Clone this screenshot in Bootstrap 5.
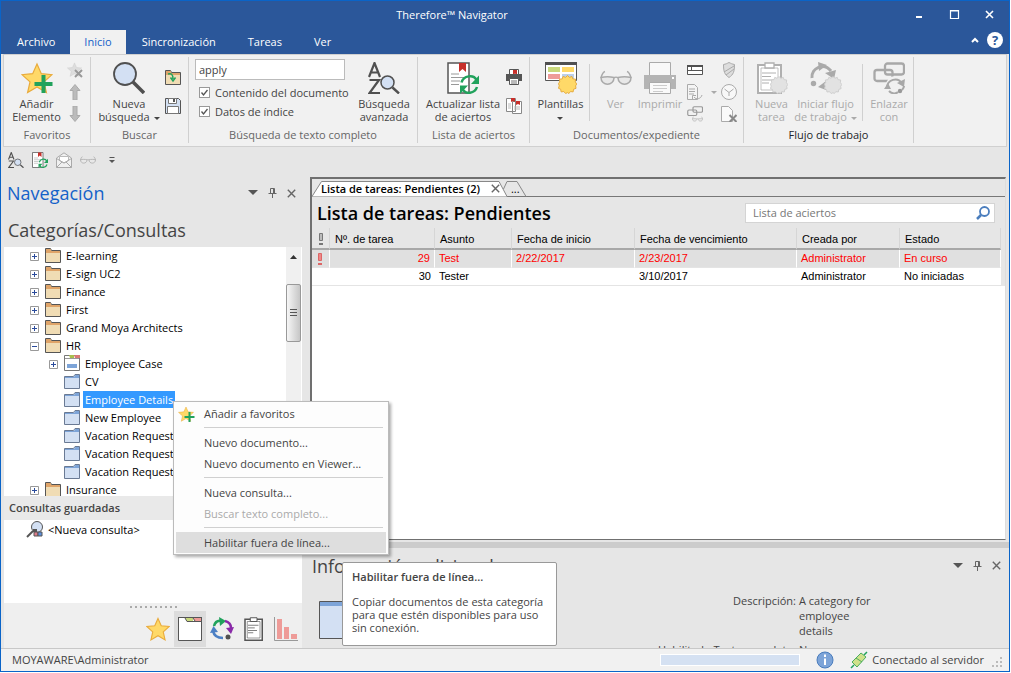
<!DOCTYPE html>
<html lang="es">
<head>
<meta charset="utf-8">
<meta name="viewport" content="width=device-width, initial-scale=1">
<title>Therefore™ Navigator</title>
<link href="https://cdn.jsdelivr.net/npm/bootstrap@5.3.0/dist/css/bootstrap.min.css" rel="stylesheet">
<style>
  :root { --ink:#444; --brand:#2b579a; --edge:#0a64c8; --face:#e6e6e6; --pale:#f1f1f1; --line:#d0d0d0; }
  html, body { height:100%; }
  body { font:11px/13px "Open Sans", "Noto Sans", sans-serif; color:var(--ink); background:#fff; overflow:hidden; padding:0 1px 1px 0; }
  button { background:none; border:0; padding:0; color:inherit; font:inherit; }
  svg { display:block; flex:none; }
  a { color:inherit; text-decoration:none; }
  .app { height:100%; border:1px solid var(--edge); background:var(--face); }
  .titlebar { background:var(--brand); color:#fff; height:53px; }
  .wintools { position:absolute; right:14px; top:6px; gap:24px; }
  .helptools { position:absolute; right:6px; top:31px; gap:8px; }
  .helpmark { color:var(--brand); width:16px; height:16px; font-size:13px; line-height:16px; }
  .wintitle { height:27px; padding-right:106px; }
  .rtabs a { padding:0 16px; height:24px; line-height:24px; color:#fff; }
  .rtabs a:first-child { padding-right:15px; }
  .rtabs a.active { background:var(--pale); color:#1462c9; padding:0 14px; }
  .ribbon { background:var(--pale); border:1px solid var(--line); margin:0 2px; height:93px; }
  .group { height:86px; margin-top:2px; border-right:1px solid var(--line); display:flex; flex-direction:column; flex:none; }
  .group .body { flex:1; display:flex; padding:5px 2px 0; min-height:0; }
  .group .cap { height:20px; padding-top:5px; text-align:center; color:#666; }
  .big { display:flex; flex-direction:column; align-items:center; text-align:center; gap:3px; flex:none; align-self:flex-start; white-space:nowrap; }
  .stack3 { display:flex; flex-direction:column; gap:6px; flex:none; }
  .stack2 { display:flex; flex-direction:column; gap:13px; padding-top:7px; flex:none; }
  .off { color:#aaa; }
  .vline { width:1px; background:var(--line); height:57px; margin-top:2px; flex:none; }
  .caret { display:inline-block; border:3px solid transparent; border-top-color:currentColor; border-bottom:0; vertical-align:middle; }
  .fsearch { display:flex; flex-direction:column; gap:6px; padding:2px 0 0 2px; }
  .fsearch label { display:flex; align-items:center; gap:5px; margin-left:4px; white-space:nowrap; }
  .ftext { width:150px; height:21px; border:1px solid #bbb; padding:0 3px; background:#fff; color:#444; }
  .tick { appearance:none; width:11px; height:11px; border:1px solid #999; background:#fff; margin:0; flex:none; }
  .tick:checked { background:#fff url("data:image/svg+xml,%3Csvg xmlns='http://www.w3.org/2000/svg' viewBox='0 0 9 9'%3E%3Cpath d='M1.5 4.5l2 2.5 4-5' fill='none' stroke='%23555' stroke-width='1.3'/%3E%3C/svg%3E") center/9px no-repeat; }
  .quick { height:28px; padding:4px 7px 6px; gap:8px; }
  .main { flex:1; min-height:0; display:flex; }
  .side { width:298px; margin-left:3px; flex:none; }
  .sidehead { height:38px; padding:0 6px 2px 3px; }
  .panetools { display:flex; align-items:center; gap:10px; }
  .big-title { font-size:18px; line-height:24px; font-weight:400; margin:0; }
  .navtitle { color:#1462c9; }
  .tree { background:#fff; height:249px; overflow:hidden; color:#000; }
  .tree ul { list-style:none; margin:-1px 0 0; padding:0; }
  .node { display:flex; align-items:center; height:18px; padding-left:26px; white-space:nowrap; }
  .node.sub { padding-left:45px; }
  .node.leaf { padding-left:60px; }
  .node .name { padding:0 2px; line-height:17px; margin-left:3px; }
  .node.sel .name { background:#3399ff; color:#fff; }
  .pm { margin-right:6px; margin-top:3px; }
  .scroller { width:15px; margin-right:1px; background:#f0f0f0; display:flex; flex-direction:column; align-items:center; }
  .thumb { width:15px; height:58px; border:1px solid #999; border-radius:2px; background:linear-gradient(90deg,#f6f6f6,#c6c6c6); display:flex; align-items:center; justify-content:center; margin-top:25px; flex:none; }
  .saved { background:#e9e9e9; height:24px; line-height:24px; padding-left:5px; font-weight:600; margin:0; font-size:11px; }
  .queries { background:#fff; flex:1; color:#000; }
  .queries a { display:flex; align-items:center; gap:4px; padding-left:22px; }
  .shelf { background:#efefef; height:45px; }
  .grip { height:8px; display:flex; justify-content:center; gap:3px; align-items:center; }
  .grip i { width:2px; height:2px; background:#aaa; }
  .shelf button { width:32px; height:36px; display:grid; place-items:center; }
  .shelf button.on { background:#dcdcdc; }
  .content { flex:1; min-width:0; margin-left:7px; }
  .frame { flex:1; min-height:0; border:2px solid #707070; border-right:1px solid #ddd; border-bottom-width:1px; margin:2px 3px 2px 1px; }
  .doctabs { height:18px; border-bottom:1px solid #777; }
  .tabtext { position:absolute; left:0; top:0; height:19px; padding-left:9px; gap:11px; white-space:nowrap; }
  .listhead { height:31px; padding:0 10px 0 5px; }
  .listhead h2 { font-weight:600; color:#000; }
  .hitbox { width:250px; height:20px; background:#fff; border:1px solid #d4d4d4; }
  .hitbox input { border:0; outline:0; background:none; color:#777; padding:0 7px; flex:1; min-width:0; }
  .hitbox input::placeholder { color:#777; opacity:1; }
  .sheet { background:var(--face); }
  .tasks { font:11px/17px "Liberation Sans", Arial, sans-serif; color:#000; background:#fff; table-layout:fixed; border-collapse:separate; border-spacing:0; width:calc(100% - 4px); }
  .tasks th { font-weight:400; height:22px; padding:2px 5px 0; border-right:1px solid #d6d6d6; border-bottom:2px solid #a8a8a8; background:var(--face); }
  .tasks th:first-child { padding-left:7px; }
  .tasks td { height:18px; padding:0 4px; border-bottom:1px solid #e4e4e4; }
  .tasks td:first-child { padding-left:6px; }
  .tasks tr.late td { color:#f00; background:#e0e0e0; border-right:1px solid #fff; }
  .info { background:var(--face); height:100px; overflow:hidden; }
  .infohead { height:35px; padding:0 8px 0 3px; }
  .infobody { padding:10px 118px 0 10px; }
  .facts { grid-template-columns:auto 92px; column-gap:3px; line-height:15px; margin:0; }
  .bar { background:#ccc; height:6px; }
  .status { height:23px; background:var(--pale); border-top:1px solid #c8c8c8; padding:0 7px 1px 11px; }
  .meter { width:140px; height:12px; background:#d5e1f2; border:1px solid #fff; }
  .ctx { position:absolute; left:172px; top:400px; width:216px; background:#fdfdfd; border:1px solid #bbb; box-shadow:2px 2px 3px #0005; padding:1px 2px; }
  .ctx button { display:flex; align-items:center; width:100%; height:21px; text-align:left; gap:8px; }
  .ctx button.plain { padding-left:28px; }
  .ctx hr { margin:3px 3px 4px 28px; border:0; border-top:1px solid #d0d0d0; opacity:1; }
  .ctx .hot { background:#dedede; }
  .tip { position:absolute; left:341px; top:561px; width:215px; height:84px; background:#fff; border:1px solid #999; border-radius:2px; padding:7px 9px; }
  .tip strong { display:block; font-weight:600; margin-bottom:12px; }
</style>
</head>
<body>
<svg width="0" height="0" class="position-absolute">
  <defs>
    <symbol id="star" viewBox="0 0 32 32"><path d="M16 2l4.300 9.700 10.700 1-8 7.200 2.400 10.600L16 25l-9.400 5.500L9 19.900l-8-7.200 10.700-1z"/></symbol>
    <symbol id="folder" viewBox="0 0 16 16"><path d="M.5 15.500V1.500h5l1 2h9v12z" fill="#f0dcb4" stroke="#555"/><path d="M1 2h4.300l1 2H15v2H1z" fill="#dfa469"/></symbol>
    <symbol id="cat" viewBox="0 0 16 16"><path d="M.5 15.500v-12h9l1.500-2h4.500v14z" fill="#d3e0f3" stroke="#6a7a94"/><path d="M1 4h9l1.500-2H15v3H1z" fill="#7da4d8"/></symbol>
    <symbol id="plus" viewBox="0 0 9 9"><path d="M.5.5h8v8h-8z" fill="#fff" stroke="#999"/><path d="M2 4.500h5M4.500 2v5" stroke="#2a4b9b"/></symbol>
    <symbol id="minus" viewBox="0 0 9 9"><path d="M.5.5h8v8h-8z" fill="#fff" stroke="#999"/><path d="M2 4.500h5" stroke="#2a4b9b"/></symbol>
    <symbol id="pin" viewBox="0 0 9 10"><path d="M2.500 5.500v-5h4v5M5.500 1v4M.5 5.500h8M4.500 6v4" fill="none" stroke="#666"/></symbol>
    <symbol id="cross" viewBox="0 0 9 9"><path d="M.8.800l7.400 7.400M8.200.800L.8 8.200" stroke="#666" stroke-width="1.400"/></symbol>
    <symbol id="az" viewBox="0 0 32 32"><path d="M1 15L6.500 1l5.500 14M3 10.500h7M1.500 18H11L1.500 31H12" fill="none" stroke="#505050" stroke-width="2.200"/><path d="M24.500 25.500l6.500 6" stroke="#505050" stroke-width="2.400"/><circle cx="19.500" cy="20.500" r="6.500" fill="#d3e0f3" stroke="#505050" stroke-width="1.500"/></symbol>
    <symbol id="refresh" viewBox="0 0 32 32"><path d="M1 1h21v30H1z" fill="#fff" stroke="#555" stroke-width="1.500"/><path d="M12 1h7v9l-3.500-3-3.500 3z" fill="#c8302b"/><path d="M4 12h8M4 15.500h14M4 19h9M4 22.500h8" stroke="#999"/><path d="M14.500 20.500c2-7 12-8.500 15-2.500M30 25c-2 6.500-11.500 8-14.500 2" fill="none" stroke="#21a25c" stroke-width="2.500"/><path d="M32 13.500v8.500h-8zM13 32v-8.500h8z" fill="#21a25c"/></symbol>
    <symbol id="glasses" viewBox="0 0 32 16"><path d="M5 1.500C3 2 2 4 1 8M27 1.500c2 .5 3 2.500 4 6.500M14 8c1-1 3-1 4 0" fill="none" stroke="#aaa" stroke-width="1.500"/><path d="M1 7.500c4-1 9-1 13 0 0 9-13 9-13 0zM18 7.500c4-1 9-1 13 0 0 9-13 9-13 0z" fill="#e8e8e8" stroke="#aaa" stroke-width="1.500"/></symbol>
    <symbol id="burst" viewBox="0 0 20 20"><path d="M10 .500l2 2 2.700-1 .9 2.600 2.900.300-.3 2.900 1.500 2.200-1.200 2 .5 2.500-2.600 1-.5 2.800-2.800-.4-1.600 2.100L10 18.500l-2 1-1.900-2.100-2.800.4-.5-2.800-2.300-1 .8-2.700L.500 9l1.300-1.700-.3-2.900 2.900-.3.900-2.600 2.700 1z"/></symbol>
    <symbol id="clip" viewBox="0 0 28 32"><path d="M2 3h23v28H2z" fill="#fff" stroke="currentColor" stroke-width="2"/><path d="M5 6h17v22H5z" fill="none" stroke="currentColor" stroke-width=".8"/><path d="M9 1h9v5H9z" fill="#fff" stroke="currentColor" stroke-width="1.300"/><path d="M6 11h14M6 14.500h9M6 18h12M6 21h7" stroke="currentColor"/></symbol>
    <symbol id="link" viewBox="0 0 32 32"><rect x="12" y="1.500" width="19" height="11" rx="2.500" fill="none" stroke="currentColor" stroke-width="2.300"/><rect x="1.500" y="8" width="18" height="11" rx="2.500" fill="none" stroke="currentColor" stroke-width="2.300"/></symbol>
  </defs>
</svg>

<div class="app d-flex flex-column position-relative">
  <header class="titlebar d-flex flex-column position-relative flex-shrink-0">
    <div class="wintitle d-flex align-items-center justify-content-center">Therefore™ Navigator</div>
    <div class="wintools d-flex">
      <button aria-label="Minimizar"><svg width="11" height="14"><path d="M2 10h6" stroke="#fff" stroke-width="2"/></svg></button>
      <button aria-label="Maximizar"><svg width="11" height="14"><path d="M1.500 3.500h8v8h-8zM1 4h9" fill="none" stroke="#fff" stroke-width="1.200"/></svg></button>
      <button aria-label="Cerrar"><svg width="11" height="14"><path d="M2 4l7 7M9 4l-7 7" stroke="#fff" stroke-width="1.600"/></svg></button>
    </div>
    <div class="helptools d-flex align-items-center">
      <button aria-label="Contraer"><svg width="8" height="6"><path d="M1 5l3-3 3 3" fill="none" stroke="#fff" stroke-width="2"/></svg></button>
      <button aria-label="Ayuda" class="helpmark rounded-circle bg-white fw-bold text-center">?</button>
    </div>
    <nav class="rtabs d-flex mt-auto">
      <a href="#">Archivo</a><a href="#" class="active">Inicio</a><a href="#">Sincronización</a><a href="#">Tareas</a><a href="#">Ver</a>
    </nav>
  </header>

  <section class="ribbon d-flex flex-shrink-0">
    <div class="group" style="width:87px">
      <div class="body">
        <button class="big" style="width:61px"><svg width="32" height="32"><use href="#star" fill="#ffd968" stroke="#e9ab3c" stroke-width="1.200"/><path d="M22.500 13v18M13.500 22h18" stroke="#21a25c" stroke-width="4"/></svg><span>Añadir<br>Elemento</span></button>
        <div class="stack3">
          <button aria-label="Quitar"><svg width="16" height="16"><use href="#star" width="15" height="15" fill="#ddd" stroke="#ccc"/><path d="M8 8l7 7M15 8l-7 7" stroke="#999" stroke-width="2"/></svg></button>
          <button aria-label="Subir"><svg width="16" height="16"><path d="M8 .500l5 6h-3V16H6V6.500H3z" fill="#bbb" stroke="#aaa"/></svg></button>
          <button aria-label="Bajar"><svg width="16" height="16"><path d="M8 15.500l5-6h-3V0H6v9.500H3z" fill="#bbb" stroke="#aaa"/></svg></button>
        </div>
      </div>
      <div class="cap">Favoritos</div>
    </div>
    <div class="group" style="width:98px">
      <div class="body">
        <button class="big" style="width:72px"><svg width="32" height="32"><path d="M20 20l11 11" stroke="#505050" stroke-width="3.500"/><circle cx="12" cy="12" r="11" fill="#d3e0f3" stroke="#505050" stroke-width="1.800"/></svg><span>Nueva<br>búsqueda<i class="caret ms-1"></i></span></button>
        <div class="stack2">
          <button aria-label="Abrir búsqueda"><svg width="16" height="16"><use href="#folder"/><path d="M3 5c3-1 5 0 5 5M5.500 8.500L8 12l2.500-3.500" fill="none" stroke="#21a25c" stroke-width="1.500"/></svg></button>
          <button aria-label="Guardar"><svg width="16" height="16"><path d="M.5.500h13l2 2v13H.5z" fill="#d3e0f3" stroke="#555"/><path d="M3.500.500h8v5h-8zM2.500 8.500h11v7h-11z" fill="#fff" stroke="#777"/><path d="M8 1h2v3H8z" fill="#555"/></svg></button>
        </div>
      </div>
      <div class="cap">Buscar</div>
    </div>
    <div class="group" style="width:229px">
      <div class="body ps-1 pt-0">
        <div class="fsearch">
          <input class="ftext" type="text" value="apply" aria-label="Texto de búsqueda">
          <label><input type="checkbox" class="tick" checked>Contenido del documento</label>
          <label><input type="checkbox" class="tick" checked>Datos de índice</label>
        </div>
        <button class="big ms-auto" style="width:62px;padding-top:5px"><svg width="32" height="32"><use href="#az"/></svg><span>Búsqueda<br>avanzada</span></button>
      </div>
      <div class="cap">Búsqueda de texto completo</div>
    </div>
    <div class="group" style="width:112px">
      <div class="body">
        <button class="big" style="width:86px"><svg width="32" height="32"><use href="#refresh"/></svg><span>Actualizar lista<br>de aciertos</span></button>
        <div class="stack2">
          <button aria-label="Imprimir lista"><svg width="16" height="16"><path d="M3.500.500h9v6h-9z" fill="#fff" stroke="#555"/><path d="M7 1h4v5L9 4.500 7 6z" fill="#c8302b"/><path d="M0 5h16v7H0z" fill="#555"/><path d="M3.500 9.500h9v6h-9z" fill="#fff" stroke="#555"/><path d="M5 12h6M5 14h6" stroke="#777"/></svg></button>
          <button aria-label="Copiar lista"><svg width="16" height="16"><path d="M.5.500h9v13h-9zM6.500 3.500h9v12h-9z" fill="#fff" stroke="#888"/><path d="M5 0h4v4L7 3 5 4zM10 3h4v4l-2-1-2 1z" fill="#c8302b"/><path d="M2 6h3M2 8h3M2 10h3M8 9h6M8 11h6" stroke="#bbb"/></svg></button>
        </div>
      </div>
      <div class="cap">Lista de aciertos</div>
    </div>
    <div class="group" style="width:214px">
      <div class="body">
        <button class="big" style="width:57px"><svg width="32" height="32"><path d="M.5.500h31v18H.5z" fill="#fff" stroke="#555"/><path d="M0 0h32v3H0z" fill="#505050"/><path d="M3 5h12v5H3z" fill="#c9d97c"/><path d="M17 5h12v5H17z" fill="#ffd968"/><path d="M3 12h12v5H3z" fill="#ee9b98"/><path d="M17 12h12v5H17z" fill="#bcd0ea"/><use href="#burst" x="13" y="13" width="19" height="19" fill="#ffd968" stroke="#e5a93c"/></svg><span>Plantillas<br><i class="caret"></i></span></button>
        <span class="vline"></span>
        <button class="big off" style="width:51px"><svg width="32" height="32"><use href="#glasses" y="8" width="32" height="16"/></svg>Ver</button>
        <button class="big off" style="width:38px"><svg width="32" height="32"><path d="M5.500.500h21v14h-21z" fill="#f8f8f8" stroke="#aaa"/><path d="M0 13h32v14H0z" fill="#b4b4b4"/><path d="M5.500 20.500h21v11h-21z" fill="#fafafa" stroke="#aaa"/><path d="M9 23.500h14M9 26.500h14M9 29.500h10" stroke="#ccc"/><path d="M28 15h2v2h-2z" fill="#fff"/></svg>Imprimir</button>
        <div class="stack3 ps-2">
          <button aria-label="Campos"><svg width="16" height="16"><path d="M.5 3.500h15v9H.5zM1 8.500h15M4.500 5v4" fill="#fff" stroke="#555"/><path d="M0 3h16v2H0z" fill="#505050"/></svg></button>
          <button aria-label="Enviar" class="d-flex align-items-center gap-2"><svg width="16" height="16"><path d="M.500.500h7l3 3v12h-10z" fill="#f4f4f4" stroke="#aaa"/><path d="M2 5h6M2 7.500h6M2 10h5M7 13c2 3 7 2 8-2M5.500 15v-3.500H9" fill="none" stroke="#aaa"/></svg><i class="caret off"></i></button>
          <button aria-label="Enlazar"><svg width="16" height="16"><use href="#link" width="16" height="16" color="#999"/><use href="#glasses" x="5" y="10" width="11" height="6"/></svg></button>
        </div>
        <div class="stack3 ms-1">
          <button aria-label="Seguridad"><svg width="16" height="16"><path d="M2.500 2.500C5 2 6 1.500 8 .500c2 1 3 1.500 5.500 2 0 7-1 10-5.500 13-4.500-3-5.500-6-5.500-13zM3 10l10-6M5 13l8-6" fill="#ddd" stroke="#aaa"/></svg></button>
          <button aria-label="Historial"><svg width="16" height="16"><circle cx="8" cy="8" r="7.500" fill="#f8f8f8" stroke="#aaa"/><path d="M3.500 5L8 8.500 12.500 5M8 8.500V12" fill="none" stroke="#aaa"/></svg></button>
          <button aria-label="Eliminar"><svg width="16" height="16"><path d="M.500.500h7l4 4v11h-11z" fill="#fafafa" stroke="#aaa"/><path d="M8.500 9l7 7M15.500 9l-7 7" stroke="#888" stroke-width="2"/></svg></button>
        </div>
      </div>
      <div class="cap">Documentos/expediente</div>
    </div>
    <div class="group" style="width:170px">
      <div class="body">
        <button class="big off" style="width:51px"><svg width="32" height="32"><use href="#clip" width="28" height="32" color="#b0b0b0"/><use href="#burst" x="14" y="14" width="18" height="18" fill="#e2e2e2" stroke="#ccc"/></svg><span>Nueva<br>tarea</span></button>
        <button class="big off" style="width:57px"><svg width="32" height="32"><path d="M2 16C1 6 14 0 21 9" fill="none" stroke="#aaa" stroke-width="3"/><path d="M8 0l9 3-8 6zM26 8l-2 9-9-6zM16 19v9l-8-3z" fill="#aaa"/><circle cx="3.500" cy="21.500" r="2.700" fill="#aaa"/><use href="#burst" x="14" y="14" width="18" height="18" fill="#e2e2e2" stroke="#ccc"/></svg><span>Iniciar flujo<br>de trabajo<i class="caret ms-1"></i></span></button>
        <span class="vline ms-2"></span>
        <button class="big off" style="width:52px"><svg width="32" height="32"><use href="#link" color="#a8a8a8"/><circle cx="22" cy="23" r="9" fill="#f1f1f1"/><path d="M14 26c0-9 11-11 14.500-5M16 29c3 3 7 3 9 1M31 24c0 2-1 3-2 4" fill="none" stroke="#a8a8a8" stroke-width="2"/><path d="M32 17l-1 8-7-4zM11 27l4-6 3 6z" fill="#a8a8a8"/><circle cx="27" cy="29" r="2.200" fill="#999"/></svg><span>Enlazar<br>con</span></button>
      </div>
      <div class="cap text-body">Flujo de trabajo</div>
    </div>
  </section>

  <div class="quick d-flex align-items-center flex-shrink-0">
    <button aria-label="Búsqueda avanzada"><svg width="16" height="16"><use href="#az"/></svg></button>
    <button aria-label="Actualizar"><svg width="16" height="16"><use href="#refresh"/></svg></button>
    <button aria-label="Correo"><svg width="16" height="16"><path d="M.5 15.500V6L8 .800 15.500 6v9.500z" fill="#f0f0f0" stroke="#aaa"/><path d="M3.500 8.500V4.500h9v4L8 11z" fill="#fff" stroke="#bbb"/><path d="M.5 6.500L8 11l7.500-4.500M.5 15.500L6 10M15.500 15.500L10 10" fill="none" stroke="#aaa"/></svg></button>
    <button aria-label="Ver"><svg width="16" height="8"><use href="#glasses"/></svg></button>
    <button aria-label="Personalizar" class="ms-1"><svg width="8" height="8"><path d="M1.500 1.500h5" stroke="#555"/><path d="M1 4h6L4 7z" fill="#555"/></svg></button>
  </div>

  <div class="main">
    <aside class="side d-flex flex-column">
      <div class="sidehead d-flex align-items-center">
        <h1 class="big-title navtitle me-auto">Navegación</h1>
        <div class="panetools">
          <button aria-label="Menú"><svg width="10" height="6"><path d="M0 0h10L5 5z" fill="#555"/></svg></button>
          <button aria-label="Anclar"><svg width="9" height="10"><use href="#pin"/></svg></button>
          <button aria-label="Cerrar"><svg width="9" height="9"><use href="#cross"/></svg></button>
        </div>
      </div>
      <h2 class="big-title ps-1" style="line-height:34px">Categorías/Consultas</h2>
      <div class="tree d-flex flex-shrink-0">
        <ul class="flex-fill">
          <li class="node"><svg class="pm" width="9" height="9"><use href="#plus"/></svg><svg width="16" height="16"><use href="#folder"/></svg><span class="name">E-learning</span></li>
          <li class="node"><svg class="pm" width="9" height="9"><use href="#plus"/></svg><svg width="16" height="16"><use href="#folder"/></svg><span class="name">E-sign UC2</span></li>
          <li class="node"><svg class="pm" width="9" height="9"><use href="#plus"/></svg><svg width="16" height="16"><use href="#folder"/></svg><span class="name">Finance</span></li>
          <li class="node"><svg class="pm" width="9" height="9"><use href="#plus"/></svg><svg width="16" height="16"><use href="#folder"/></svg><span class="name">First</span></li>
          <li class="node"><svg class="pm" width="9" height="9"><use href="#plus"/></svg><svg width="16" height="16"><use href="#folder"/></svg><span class="name">Grand Moya Architects</span></li>
          <li class="node"><svg class="pm" width="9" height="9"><use href="#minus"/></svg><svg width="16" height="16"><use href="#folder"/></svg><span class="name">HR</span></li>
          <li class="node sub"><svg class="pm" width="9" height="9"><use href="#plus"/></svg><svg width="16" height="16"><path d="M.5.500h15v15H.5z" fill="#fff" stroke="#777"/><path d="M5 0h5v3H6z" fill="#a9bf4e"/><path d="M10 0h6v3h-5z" fill="#d87a76"/><path d="M1 3.500h14" stroke="#999"/><path d="M3 9h10v4H3z" fill="#7da4d8"/></svg><span class="name">Employee Case</span></li>
          <li class="node leaf"><svg width="16" height="16"><use href="#cat"/></svg><span class="name">CV</span></li>
          <li class="node leaf sel"><svg width="16" height="16"><use href="#cat"/></svg><span class="name">Employee Details</span></li>
          <li class="node leaf"><svg width="16" height="16"><use href="#cat"/></svg><span class="name">New Employee</span></li>
          <li class="node leaf"><svg width="16" height="16"><use href="#cat"/></svg><span class="name">Vacation Request</span></li>
          <li class="node leaf"><svg width="16" height="16"><use href="#cat"/></svg><span class="name">Vacation Request</span></li>
          <li class="node leaf"><svg width="16" height="16"><use href="#cat"/></svg><span class="name">Vacation Request</span></li>
          <li class="node"><svg class="pm" width="9" height="9"><use href="#plus"/></svg><svg width="16" height="16"><use href="#folder"/></svg><span class="name">Insurance</span></li>
        </ul>
        <div class="scroller pt-2"><svg width="7" height="4"><path d="M0 4h7L3.500 0z" fill="#333"/></svg><div class="thumb"><svg width="7" height="8"><path d="M0 .500h7M0 3.500h7M0 6.500h7" stroke="#555"/></svg></div></div>
      </div>
      <h3 class="saved flex-shrink-0">Consultas guardadas</h3>
      <div class="queries">
        <a href="#"><svg width="18" height="18"><path d="M1 17l6-6" stroke="#555" stroke-width="2"/><circle cx="11" cy="7" r="5.500" fill="#d3e0f3" stroke="#555"/><path d="M7 9h4v3H7z" fill="#555"/><path d="M8 12h4v4H8z" fill="#dd7c8a" stroke="#555"/><path d="M12 12h4v4h-4z" fill="#5c8fdc" stroke="#555"/></svg>&lt;Nueva consulta&gt;</a>
      </div>
      <div class="shelf flex-shrink-0">
        <div class="grip"><i></i><i></i><i></i><i></i><i></i><i></i><i></i><i></i><i></i><i></i></div>
        <div class="d-flex justify-content-end">
          <button aria-label="Favoritos"><svg width="24" height="24"><use href="#star" fill="#ffd968" stroke="#e9ab3c" stroke-width="1.500"/></svg></button>
          <button aria-label="Categorías" class="on"><svg width="24" height="24"><path d="M.5.500h23v23H.5z" fill="#fff" stroke="#555"/><path d="M7 1h8v3H9z" fill="#c9d97c"/><path d="M15 1h8v3h-6z" fill="#ee9b98"/><path d="M0 .500h24M7 1l2 3.500M15 1l2 3M9 4.500h15" fill="none" stroke="#555"/></svg></button>
          <button aria-label="Flujos"><svg width="24" height="24"><path d="M4 9C5 5 8 3 12 4" fill="none" stroke="#21a25c" stroke-width="2.500"/><path d="M9 0l7 4-6 5z" fill="#21a25c"/><path d="M15 4c4 1 6 4 6 7" fill="none" stroke="#8a2aa8" stroke-width="2.500"/><path d="M24 10l-3 7-5-6z" fill="#8a2aa8"/><path d="M3 14c1 5 4 7 10 7" fill="none" stroke="#4b7fc4" stroke-width="2.500"/><path d="M0 16l3.500-7L8 15z" fill="#4b7fc4"/><circle cx="18" cy="20" r="2.500" fill="#505050"/></svg></button>
          <button aria-label="Tareas"><svg width="22" height="24" color="#555"><use href="#clip"/></svg></button>
          <button aria-label="Informes"><svg width="24" height="24"><path d="M3 2h5v20H3zM10 10h5v12h-5zM17 17h6v5h-6z" fill="#ee9b98"/><path d="M.5 0v23.500H24" fill="none" stroke="#999"/></svg></button>
        </div>
      </div>
    </aside>

    <main class="content d-flex flex-column">
      <section class="frame d-flex flex-column">
        <div class="doctabs d-flex position-relative flex-shrink-0">
          <svg width="215" height="18"><path d="M0 17.500L9.500 2.500H187L195 17.500z" fill="#fff"/><path d="M0 17.500L9.500 2.500H187L195 17.500M191.500 10L195 2.500h10L214 17.500" fill="none" stroke="#888"/></svg>
          <div class="tabtext d-flex align-items-center text-black"><a href="#" class="fw-semibold">Lista de tareas: Pendientes (2)</a><button aria-label="Cerrar"><svg width="9" height="9"><use href="#cross"/></svg></button><a href="#">...</a></div>
        </div>
        <div class="listhead d-flex align-items-center justify-content-between flex-shrink-0">
          <h2 class="big-title">Lista de tareas: Pendientes</h2>
          <div class="hitbox d-flex align-items-center pe-1"><input type="text" placeholder="Lista de aciertos" aria-label="Lista de aciertos"><svg width="14" height="14"><path d="M1 13l4-4" stroke="#4a7dbd" stroke-width="2.500"/><circle cx="8.500" cy="5.500" r="4.500" fill="none" stroke="#4a7dbd" stroke-width="1.800"/></svg></div>
        </div>
        <div class="bg-white flex-fill overflow-hidden">
          <div class="sheet">
          <table class="tasks">
            <colgroup><col style="width:18px"><col style="width:105px"><col style="width:77px"><col style="width:123px"><col style="width:162px"><col style="width:103px"><col></colgroup>
            <thead><tr><th><svg width="4" height="12"><path d="M.5.500h3v7h-3z" fill="#bbb" stroke="#777"/><path d="M0 10h4v2H0z" fill="#777"/></svg></th><th>Nº. de tarea</th><th>Asunto</th><th>Fecha de inicio</th><th>Fecha de vencimiento</th><th>Creada por</th><th>Estado</th></tr></thead>
            <tbody>
              <tr class="late"><td><svg width="4" height="12"><path d="M.5.500h3v7h-3z" fill="#e88" stroke="#d66"/><path d="M0 10h4v2H0z" fill="#d66"/></svg></td><td class="text-end">29</td><td>Test</td><td>2/22/2017</td><td>2/23/2017</td><td>Administrator</td><td>En curso</td></tr>
              <tr><td></td><td class="text-end">30</td><td>Tester</td><td></td><td>3/10/2017</td><td>Administrator</td><td>No iniciadas</td></tr>
            </tbody>
          </table>
          </div>
        </div>
      </section>
      <div class="bar flex-shrink-0"></div>
      <section class="info flex-shrink-0">
        <div class="infohead d-flex align-items-center">
          <h2 class="big-title me-auto">Información adicional</h2>
          <div class="panetools">
            <button aria-label="Menú"><svg width="10" height="6"><path d="M0 0h10L5 5z" fill="#555"/></svg></button>
            <button aria-label="Anclar"><svg width="9" height="10"><use href="#pin"/></svg></button>
            <button aria-label="Cerrar"><svg width="9" height="9"><use href="#cross"/></svg></button>
          </div>
        </div>
        <div class="infobody d-flex justify-content-between">
          <svg width="48" height="38" class="mt-2"><path d="M.5.500h47v37H.5z" fill="#d3e0f3" stroke="#555"/><path d="M1 1h46v4H1z" fill="#7da4d8"/></svg>
          <dl class="facts d-grid">
            <dt class="fw-normal text-end">Descripción:</dt><dd class="m-0 pe-3">A category for employee details</dd>
            <dt class="fw-normal text-end pt-1">Habilitado Texto completo:</dt><dd class="m-0 pt-1">No</dd>
          </dl>
        </div>
      </section>
    </main>
  </div>

  <footer class="status d-flex align-items-center flex-shrink-0">
    <span class="me-auto">MOYAWARE\Administrator</span>
    <div class="meter"></div>
    <svg class="ms-3 me-3" width="18" height="18"><circle cx="9" cy="9" r="8" fill="#7da4d8" stroke="#4a7dbd"/><path d="M9 3.500v2.500M9 7.500V14" stroke="#fff" stroke-width="2"/></svg>
    <svg width="18" height="18" class="me-1"><path d="M1 17l3-3M14 4l3-3" stroke="#21a25c" stroke-width="1.500"/><path d="M2 11l9-9 5 4-9 10z" fill="#cfe08a" stroke="#4cae5f"/><path d="M6 7l6 4" stroke="#4cae5f"/></svg>
    <span>Conectado al servidor</span>
    <svg class="ms-2 mt-1" width="10" height="10"><path d="M8 0h2v2H8zM4 4h2v2H4zM8 4h2v2H8zM0 8h2v2H0zM4 8h2v2H4zM8 8h2v2H8z" fill="#bbb"/></svg>
  </footer>

  <div class="ctx" role="menu">
    <button role="menuitem"><svg width="20" height="18"><use href="#star" x="2" y="1" width="16" height="16" fill="#ffd968" stroke="#e9ab3c"/><path d="M13.500 7v10M8.500 12h10" stroke="#21a25c" stroke-width="2"/></svg>Añadir a favoritos</button>
    <hr>
    <button role="menuitem" class="plain">Nuevo documento...</button>
    <button role="menuitem" class="plain">Nuevo documento en Viewer...</button>
    <hr>
    <button role="menuitem" class="plain">Nueva consulta...</button>
    <button role="menuitem" class="plain off" disabled>Buscar texto completo...</button>
    <hr>
    <button role="menuitem" class="plain hot">Habilitar fuera de línea...</button>
  </div>
  <div class="tip" role="tooltip"><strong>Habilitar fuera de línea...</strong>Copiar documentos de esta categoría para que estén disponibles para uso sin conexión.</div>
</div>
<script src="https://cdn.jsdelivr.net/npm/bootstrap@5.3.0/dist/js/bootstrap.bundle.min.js"></script>
</body>
</html>
